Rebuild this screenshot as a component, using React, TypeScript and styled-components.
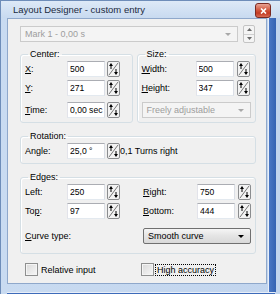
import styled, { createGlobalStyle } from "styled-components"

const Global = createGlobalStyle`
  html, body { margin: 0; padding: 0; background: #fff; }
  body { font-family: "Liberation Sans", Arial, sans-serif; font-size: 9px; color: #000; }
`

const Window = styled.div`
  width: 280px;
  height: 294px;
  box-sizing: border-box;
  display: flex;
  flex-direction: column;
  background: linear-gradient(90deg, #c9dbf1 0%, #c2d5ee 100%);
  border: 1px solid #6e8db9;
  border-right: none;
  border-bottom: none;
`

const TitleBar = styled.div`
  height: 20px;
  display: flex;
  align-items: center;
  padding: 0 9px 0 12px;
  background: linear-gradient(#dde9f7, #c8daf0);
  font-size: 9.5px;
  color: #1b2a40;
`

const Title = styled.span`
  flex: 1;
`

const CloseBtn = styled.div`
  width: 14px;
  height: 13px;
  margin-top: 2px;
  border: 1px solid #7a2a22;
  border-radius: 3px;
  background: linear-gradient(#e9a494, #cf5239 50%, #c23a22 70%, #d86a52);
  display: flex;
  align-items: center;
  justify-content: center;
`

const Body = styled.div`
  flex: 1;
  display: flex;
  margin: 0 0 0 6px;
`

const Client = styled.div`
  width: 260px;
  height: 266px;
  box-sizing: border-box;
  border: 1px solid #8fa8cb;
  background: #f0f0f0;
  display: flex;
  flex-direction: column;
  padding: 6px 10px 0 12px;
`

const RightEdge = styled.div`
  width: 7px;
  height: 274px;
  margin-left: 1px;
  background: linear-gradient(90deg, #4a77c4, #3563b3);
  border-left: 1px solid #e8eef8;
`

const BottomEdge = styled.div`
  height: 6px;
  margin-left: 6px;
  width: 268px;
  background: #3d6bba;
  border-top: 1px solid #e8eef8;
`

const TopRow = styled.div`
  display: flex;
  align-items: center;
  gap: 5px;
  height: 18px;
`

const Combo = styled.div<{ $disabled?: boolean; $w: number }>`
  width: ${p => p.$w}px;
  height: 16px;
  box-sizing: border-box;
  display: flex;
  align-items: center;
  padding: 0 4px;
  border: 1px solid ${p => (p.$disabled ? "#cbcbcb" : "#707070")};
  border-radius: ${p => (p.$disabled ? "0" : "2px")};
  background: ${p => (p.$disabled ? "#f4f4f4" : "linear-gradient(#f5f5f5, #e4e4e4 50%, #d9d9d9)")};
  color: ${p => (p.$disabled ? "#9d9d9d" : "#000")};
  span { flex: 1; }
`

const Arrow = styled.i<{ $disabled?: boolean }>`
  width: 0;
  height: 0;
  border-left: 3px solid transparent;
  border-right: 3px solid transparent;
  border-top: 3px solid ${p => (p.$disabled ? "#a8a8a8" : "#000")};
  margin-right: 2px;
`

const UpDown = styled.div`
  width: 12px;
  height: 18px;
  box-sizing: border-box;
  border: 1px solid #c4c4c4;
  border-radius: 2px;
  background: #f4f4f4;
  display: flex;
  flex-direction: column;
  div {
    flex: 1;
    display: flex;
    align-items: center;
    justify-content: center;
  }
  div + div { border-top: 1px solid #d0d0d0; }
`

const Groups = styled.div`
  display: flex;
  gap: 4px;
  margin-top: 6px;
`

const Group = styled.fieldset<{ $w?: number; $gap?: number; $pb?: number }>`
  margin: ${p => p.$gap ?? 0}px 0 0 0;
  ${p => (p.$w ? `width: ${p.$w}px;` : "")}
  box-sizing: border-box;
  border: 1px solid #d5dfe5;
  border-radius: 3px;
  box-shadow: inset 1px 1px 0 #fff;
  padding: 1px 4px ${p => p.$pb ?? 4}px 4px;
  min-width: 0;
  display: flex;
  flex-direction: column;
  gap: 3px;
  legend {
    line-height: 11px;
    padding: 0 2px;
    margin-left: 3px;
  }
`

const Row = styled.div<{ $top?: number }>`
  display: flex;
  align-items: center;
  height: 16px;
  margin-top: ${p => p.$top ?? 0}px;
`

const Label = styled.label<{ $w: number }>`
  width: ${p => p.$w}px;
  flex: none;
`

const Field = styled.input`
  width: 38px;
  height: 16px;
  box-sizing: border-box;
  border: 1px solid;
  border-color: #abadb3 #dbdfe6 #e3e9ef #e2e3ea;
  background: #fff;
  padding: 0 0 0 2px;
  font: inherit;
  font-size: 8.6px;
  color: #000;
  outline: none;
  flex: none;
`

const SpinWrap = styled.span<{ $gap: number }>`
  display: flex;
  margin-left: ${p => p.$gap}px;
`

const EdgeGrid = styled.div`
  display: grid;
  grid-template-columns: 95px 108px;
  column-gap: 23px;
  row-gap: 3px;
`

const Checks = styled.div`
  display: flex;
  align-items: center;
  margin-top: 9px;
  padding-left: 5px;
`

const Check = styled.label<{ $w?: number }>`
  display: flex;
  align-items: center;
  ${p => (p.$w ? `width: ${p.$w}px;` : "")}
`

const Box = styled.span`
  width: 11px;
  height: 11px;
  flex: none;
  border: 1px solid #8e8f8f;
  background: linear-gradient(135deg, #d9d9d9, #f7f7f7);
  box-shadow: inset 0 0 0 1px #f4f4f4;
  margin-right: 1px;
`

const CheckText = styled.span<{ $focus?: boolean }>`
  padding: 0 1px;
  border: 1px dotted ${p => (p.$focus ? "#000" : "transparent")};
`

function Spin() {
  return (
    <svg width="13" height="16" viewBox="0 0 13 16">
      <rect x="0.5" y="0.5" width="12" height="15" rx="1.5" fill="#f3f3f3" stroke="#8b8d8f" />
      <line x1="2" y1="14" x2="11" y2="2" stroke="#777" strokeWidth="1" />
      <line x1="4" y1="4" x2="4" y2="8" stroke="#000" strokeWidth="1" />
      <polygon points="2,5 4,2 6,5" fill="#000" />
      <line x1="9" y1="8" x2="9" y2="12" stroke="#000" strokeWidth="1" />
      <polygon points="7,11 9,14 11,11" fill="#000" />
    </svg>
  )
}

function NumRow({ label, ul, value, lw, gap, top }: { label: string; ul: number; value: string; lw: number; gap: number; top?: number }) {
  return (
    <Row $top={top}>
      <Label $w={lw}>
        {ul < 0 ? label : <>{label.slice(0, ul)}<u>{label[ul]}</u>{label.slice(ul + 1)}</>}:
      </Label>
      <Field readOnly value={value} />
      <SpinWrap $gap={gap}><Spin /></SpinWrap>
    </Row>
  )
}

export default function App() {
  return (
    <>
      <Global />
      <Window>
        <TitleBar>
          <Title>Layout Designer - custom entry</Title>
          <CloseBtn>
            <svg width="7" height="6" viewBox="0 0 7 6">
              <path d="M1 0.5 L6 5.5 M6 0.5 L1 5.5" stroke="#fff" strokeWidth="1.6" />
            </svg>
          </CloseBtn>
        </TitleBar>
        <Body>
          <Client>
            <TopRow>
              <Combo $disabled $w={218}>
                <span>Mark 1 - 0,00 s</span>
                <Arrow $disabled />
              </Combo>
              <UpDown>
                <div><svg width="5" height="3"><polygon points="0,3 2.5,0 5,3" fill="#6a6a6a" /></svg></div>
                <div><svg width="5" height="3"><polygon points="0,0 2.5,3 5,0" fill="#6a6a6a" /></svg></div>
              </UpDown>
            </TopRow>

            <Groups>
              <Group $w={113}>
                <legend>Center:</legend>
                <NumRow label="X" ul={0} value="500" lw={42} gap={2} />
                <NumRow label="Y" ul={0} value="271" lw={42} gap={2} />
                <NumRow label="Time" ul={0} value="0,00 sec" lw={42} gap={2} top={3} />
              </Group>
              <Group $w={120}>
                <legend>Size:</legend>
                <NumRow label="Width" ul={0} value="500" lw={54} gap={3} />
                <NumRow label="Height" ul={0} value="347" lw={54} gap={3} />
                <Row $top={3}>
                  <Combo $disabled $w={111}>
                    <span>Freely adjustable</span>
                    <Arrow $disabled />
                  </Combo>
                </Row>
              </Group>
            </Groups>

            <Group $gap={8}>
              <legend>Rotation:</legend>
              <Row>
                <Label $w={42}>Angle:</Label>
                <Field readOnly value="25,0 °" />
                <SpinWrap $gap={2}><Spin /></SpinWrap>
                <span>0,1 Turns right</span>
              </Row>
            </Group>

            <Group $gap={8} $pb={9}>
              <legend>Edges:</legend>
              <EdgeGrid>
                <NumRow label="Left" ul={-1} value="250" lw={42} gap={2} />
                <NumRow label="Right" ul={0} value="750" lw={54} gap={3} />
                <NumRow label="Top" ul={2} value="97" lw={42} gap={2} />
                <NumRow label="Bottom" ul={0} value="444" lw={54} gap={3} />
                <Row $top={6}>
                  <Label $w={95}><u>C</u>urve type:</Label>
                </Row>
                <Row $top={6}>
                  <Combo $w={111}>
                    <span>Smooth curve</span>
                    <Arrow />
                  </Combo>
                </Row>
              </EdgeGrid>
            </Group>

            <Checks>
              <Check $w={116}><Box /><CheckText>Relative input</CheckText></Check>
              <Check><Box /><CheckText $focus>High accuracy</CheckText></Check>
            </Checks>
          </Client>
          <RightEdge />
        </Body>
        <BottomEdge />
      </Window>
    </>
  )
}
